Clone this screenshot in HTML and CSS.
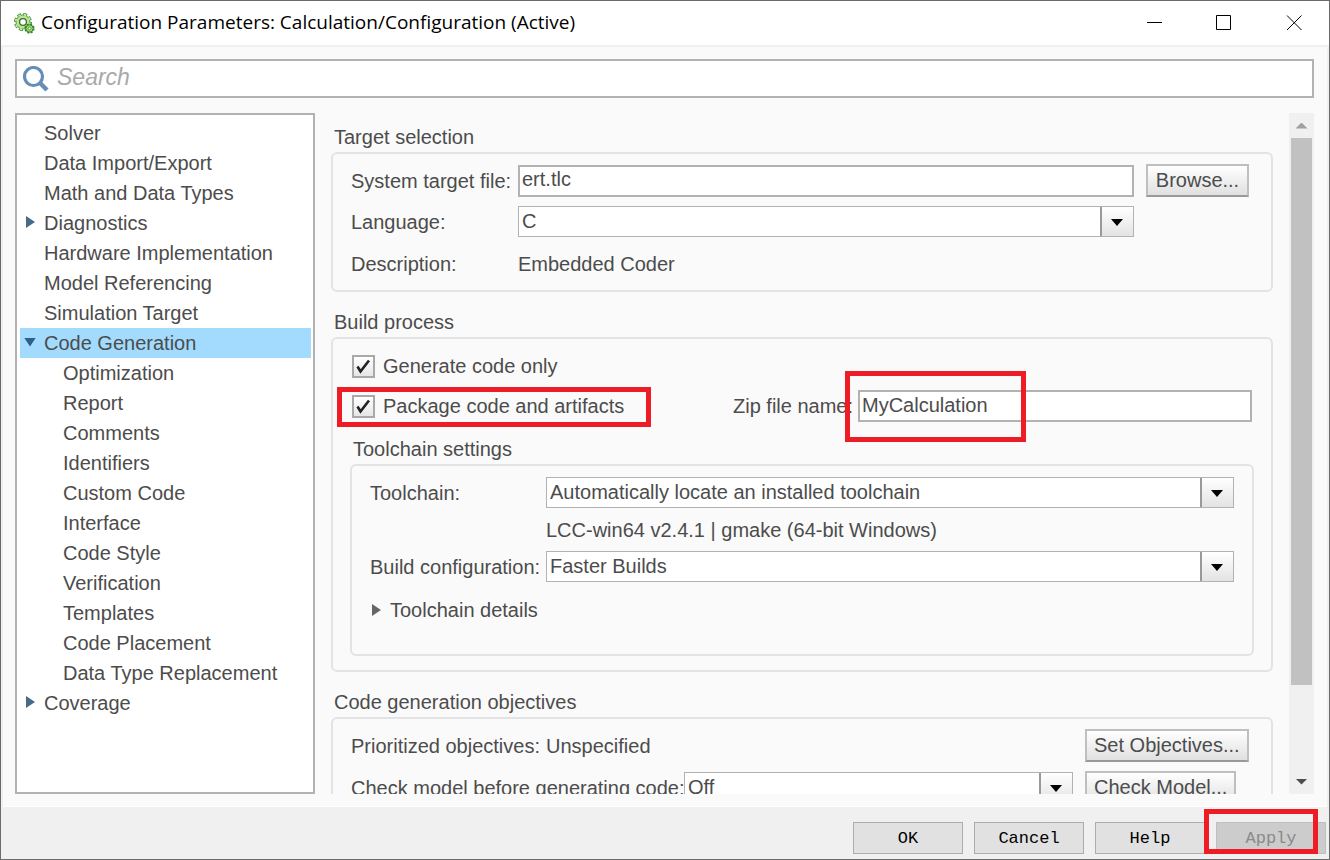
FILE: index.html
```html
<!DOCTYPE html>
<html lang="en">
<head>
  <meta charset="UTF-8">
  <meta name="viewport" content="width=device-width, initial-scale=1.0">
  <title>Configuration Parameters: Calculation/Configuration (Active)</title>
  <link rel="stylesheet" href="styles.css">
</head>
<body>
  <div class="window">
    <header class="titlebar">
      <svg class="app-icon" width="21" height="21" viewBox="0 0 21 21">
        <circle cx="9" cy="9" r="7.600" fill="none" stroke="#3d8a2e" stroke-width="2.800" stroke-dasharray="3.900 2.070"/>
        <circle cx="9" cy="9" r="7" fill="#b9e396" stroke="#57a344" stroke-width="1"/>
        <circle cx="9" cy="9" r="7.400" fill="none" stroke="#c9eaa9" stroke-width="1.800" stroke-dasharray="2.400 3.412" stroke-dashoffset="-.75"/>
        <circle cx="9" cy="9" r="3.400" fill="#fff" stroke="#3d6f33" stroke-width="1.300"/>
        <circle cx="15.500" cy="15.500" r="4.200" fill="none" stroke="#2f7f22" stroke-width="1.800" stroke-dasharray="2 1.298"/>
        <circle cx="15.500" cy="15.500" r="3.700" fill="#9bd970" stroke="#35852a" stroke-width="1"/>
        <circle cx="15.500" cy="15.500" r="1.400" fill="#fff" stroke="#3f7f2c" stroke-width=".8"/>
      </svg>
      <h1 class="title">Configuration Parameters: Calculation/Configuration (Active)</h1>
      <div class="window-buttons">
        <button type="button" aria-label="Minimize"><svg width="16" height="16" viewBox="0 0 16 16"><path d="M1 7.500h15"/></svg></button>
        <button type="button" aria-label="Maximize"><svg width="16" height="16" viewBox="0 0 16 16"><path d="M.5.500h14v14H.5z"/></svg></button>
        <button type="button" aria-label="Close"><svg width="16" height="16" viewBox="0 0 16 16"><path d="M1 .500l14.500 14.500M15.500.500L1 15"/></svg></button>
      </div>
    </header>

    <main class="content">
      <label class="search">
        <svg width="26" height="26" viewBox="0 0 26 26">
          <circle cx="10.500" cy="10.500" r="9" fill="none" stroke="#668db8" stroke-width="3.200"/>
          <path d="M17 17l7 7" stroke="#668db8" stroke-width="4.400"/>
        </svg>
        <input type="search" placeholder="Search" aria-label="Search">
      </label>

      <div class="panels">
        <nav class="tree">
          <ul>
            <li><a href="#">Solver</a></li>
            <li><a href="#">Data Import/Export</a></li>
            <li><a href="#">Math and Data Types</a></li>
            <li><a href="#" class="closed">Diagnostics</a></li>
            <li><a href="#">Hardware Implementation</a></li>
            <li><a href="#">Model Referencing</a></li>
            <li><a href="#">Simulation Target</a></li>
            <li>
              <a href="#" class="open selected">Code Generation</a>
              <ul class="children">
                <li><a href="#">Optimization</a></li>
                <li><a href="#">Report</a></li>
                <li><a href="#">Comments</a></li>
                <li><a href="#">Identifiers</a></li>
                <li><a href="#">Custom Code</a></li>
                <li><a href="#">Interface</a></li>
                <li><a href="#">Code Style</a></li>
                <li><a href="#">Verification</a></li>
                <li><a href="#">Templates</a></li>
                <li><a href="#">Code Placement</a></li>
                <li><a href="#">Data Type Replacement</a></li>
              </ul>
            </li>
            <li><a href="#" class="closed">Coverage</a></li>
          </ul>
        </nav>

        <div class="pane">
          <section>
            <h2>Target selection</h2>
            <div class="group target">
              <label for="target-file">System target file:</label>
              <input class="field" id="target-file" type="text" value="ert.tlc">
              <button class="btn" type="button">Browse...</button>
              <label for="language">Language:</label>
              <div class="select">
                <select id="language"><option>C</option><option>C++</option></select>
              </div>
              <span>Description:</span>
              <span>Embedded Coder</span>
            </div>
          </section>

          <section>
            <h2>Build process</h2>
            <div class="group build">
              <div class="option-row">
                <label class="check"><input type="checkbox" checked>Generate code only</label>
              </div>
              <div class="option-row">
                <label class="check marked mark-check"><input type="checkbox" checked>Package code and artifacts</label>
                <label for="zip-name">Zip file name:</label>
                <div class="marked mark-zip">
                  <input class="field" id="zip-name" type="text" value="MyCalculation">
                </div>
              </div>

              <h3>Toolchain settings</h3>
              <div class="group toolchain">
                <label for="toolchain">Toolchain:</label>
                <div class="select">
                  <select id="toolchain"><option>Automatically locate an installed toolchain</option></select>
                </div>
                <span class="value">LCC-win64 v2.4.1 | gmake (64-bit Windows)</span>
                <label for="build-config">Build configuration:</label>
                <div class="select">
                  <select id="build-config"><option>Faster Builds</option><option>Faster Runs</option></select>
                </div>
                <details>
                  <summary>Toolchain details</summary>
                </details>
              </div>
            </div>
          </section>

          <section>
            <h2>Code generation objectives</h2>
            <div class="group objectives">
              <div class="pair">
                <span class="objectives-name">Prioritized objectives:</span>
                <span>Unspecified</span>
              </div>
              <button class="btn" type="button">Set Objectives...</button>
              <div class="pair">
                <label class="check-name" for="check-model">Check model before generating code:</label>
                <div class="select">
                  <select id="check-model"><option>Off</option><option>On</option></select>
                </div>
              </div>
              <button class="btn" type="button">Check Model...</button>
            </div>
          </section>
        </div>

        <div class="scrollbar">
          <button class="up" type="button" aria-label="Scroll up"></button>
          <div class="track"><div class="thumb"></div></div>
          <button class="down" type="button" aria-label="Scroll down"></button>
        </div>
      </div>
    </main>

    <footer class="footer">
      <button type="button">OK</button>
      <button type="button">Cancel</button>
      <button type="button">Help</button>
      <div class="marked mark-apply">
        <button type="button" disabled>Apply</button>
      </div>
    </footer>
  </div>
</body>
</html>
```
FILE: styles.css
```css
*, *::before, *::after {
  margin: 0;
  padding: 0;
  box-sizing: border-box;
}

body {
  height: 100vh;
  overflow: hidden;
  font-family: "Liberation Sans", Arial, sans-serif;
  font-size: 20px;
  line-height: 22px;
  color: #4c4c4c;
}

button, input, select {
  font: inherit;
  color: inherit;
  border-radius: 0;
  outline: none;
}

.window {
  display: flex;
  flex-direction: column;
  height: 100%;
  border: 1px solid #6b6b6b;
  background: #f0f0f0;
}

/* title bar */
.titlebar {
  display: flex;
  align-items: center;
  height: 44px;
  padding-left: 13px;
  background: #fff;
}

.title {
  flex: 1;
  margin-left: 6px;
  padding-bottom: 2px;
  font-family: "Open Sans", "Segoe UI", sans-serif;
  font-size: 19px;
  font-weight: normal;
  color: #000;
}

.window-buttons {
  display: flex;
}

.window-buttons button {
  width: 70px;
  height: 44px;
  border: none;
  background: none;
}

.window-buttons svg {
  display: block;
  margin: 0 auto;
  fill: none;
  stroke: #000;
}

/* content */
.content {
  flex: 1;
  min-height: 0;
  display: flex;
  flex-direction: column;
  gap: 15px;
  margin: 0 2px;
  padding: 12px 13px 12px 12px;
  border-top: 2px solid #f0f0f0;
  border-bottom: 1px solid #fff;
  background: #fafafa;
}

.search {
  display: flex;
  align-items: center;
  height: 39px;
  padding-left: 6px;
  border: 2px solid #b2b2b2;
  background: #fff;
}

.search input {
  flex: 1;
  padding: 0 8px 4px;
  border: none;
  background: none;
  font-size: 23px;
  line-height: 28px;
}

.search input::placeholder {
  font-style: italic;
  color: #a9a9a9;
}

.panels {
  flex: 1;
  min-height: 0;
  display: flex;
}

/* tree */
.tree {
  width: 300px;
  padding: 3px 2px 3px 3px;
  border: 2px solid #b2b2b2;
  background: #fff;
}

.tree ul {
  list-style: none;
}

.tree a {
  display: flex;
  align-items: center;
  height: 30px;
  padding-left: 24px;
  color: inherit;
  text-decoration: none;
}

.tree .children a {
  padding-left: 43px;
}

.tree .closed, .tree .open {
  padding-left: 4px;
}

.tree .closed::before {
  content: "";
  width: 9px;
  height: 12px;
  margin: 0 9px 2px 2px;
  background: #4b6887;
  clip-path: polygon(0 0, 100% 50%, 0 100%);
}

.tree .open::before {
  content: "";
  width: 12px;
  height: 9px;
  margin: 0 8px 2px 0;
  background: #2f5f8c;
  clip-path: polygon(0 0, 100% 0, 50% 100%);
}

.tree .selected {
  background: #a3dbff;
}

/* settings pane */
.pane {
  flex: 1;
  min-width: 0;
  overflow: hidden;
  padding: 0 16px;
}

h2, h3 {
  margin: 19px 3px 4px;
  font-size: 20px;
  font-weight: normal;
}

section:first-child h2 {
  margin-top: 13px;
}

h3 {
  margin-top: 12px;
}

.group {
  border: 2px solid #e3e3e3;
  border-radius: 6px;
}

.field {
  display: block;
  width: 100%;
  height: 32px;
  padding: 0 2px 2px;
  border: 2px solid #b2b2b2;
  background: #fff;
}

.select {
  position: relative;
  height: 31px;
}

.select select {
  display: block;
  width: 100%;
  height: 100%;
  padding: 0 36px 2px 3px;
  border: 1px solid #b2b2b2;
  background: #fff;
  appearance: none;
}

.select::before {
  content: "";
  position: absolute;
  top: 1px;
  right: 1px;
  bottom: 1px;
  width: 33px;
  border-left: 2px solid #999;
  background: linear-gradient(#fff, #e3e3e3);
  pointer-events: none;
}

.select::after {
  content: "";
  position: absolute;
  top: 13px;
  right: 11px;
  width: 12px;
  height: 7px;
  background: #000;
  clip-path: polygon(0 0, 100% 0, 50% 100%);
  pointer-events: none;
}

.btn {
  height: 33px;
  padding: 0 7px 2px;
  border: 2px solid #bfbfbf;
  border-bottom-color: #999;
  background: linear-gradient(#fff, #e0e0e0);
  white-space: nowrap;
}

.target {
  display: grid;
  grid-template-columns: 167px 1fr 115px;
  grid-template-rows: 33px 9px 31px 53px;
  align-items: center;
  padding: 10px 22px 0 18px;
}

.target > :nth-child(n + 4) {
  grid-row: 3;
}

.target > :nth-child(n + 6) {
  grid-row: 4;
}

.target .btn {
  margin-left: 12px;
}

.build {
  padding: 7px 17px 14px;
}

.option-row {
  display: grid;
  grid-template-columns: 381px 125px 1fr;
  align-items: center;
  height: 40px;
  padding: 0 2px;
}

.check {
  display: flex;
  align-items: center;
  gap: 8px;
}

.check input {
  width: 23px;
  height: 23px;
  border: 2px solid #a9a9a9;
  background: linear-gradient(#fff, #e6e6e6);
  appearance: none;
}

.check input:checked {
  background: url("data:image/svg+xml,%3Csvg xmlns='http://www.w3.org/2000/svg' viewBox='0 0 19 19'%3E%3Cpath d='M3.500 9.500L6.500 14.500L15 3.500' fill='none' stroke='%23222' stroke-width='2.600'/%3E%3C/svg%3E"), linear-gradient(#fff, #e6e6e6);
}

.toolchain {
  display: grid;
  grid-template-columns: 176px 1fr;
  grid-template-rows: 31px 43px 31px;
  align-items: center;
  padding: 11px 18px 33px;
}

.toolchain .value {
  grid-column: 2;
}

.toolchain details {
  grid-column: 1 / 3;
  margin-top: 17px;
}

.toolchain summary {
  display: flex;
  align-items: center;
  gap: 9px;
  padding-left: 2px;
}

.toolchain summary::before {
  content: "";
  width: 9px;
  height: 12px;
  background: #666;
  clip-path: polygon(0 0, 100% 50%, 0 100%);
}

.objectives {
  display: grid;
  grid-template-columns: 1fr 164px;
  gap: 9px 12px;
  padding: 10px 22px 10px 18px;
}

.pair {
  display: flex;
  align-items: center;
}

.objectives-name {
  width: 195px;
}

.check-name {
  width: 333px;
  white-space: nowrap;
}

.pair .select {
  flex: 1;
}

.objectives .btn {
  justify-self: start;
}

/* scrollbar */
.scrollbar {
  display: flex;
  flex-direction: column;
  width: 25px;
  background: #f0f0f0;
}

.scrollbar button {
  height: 25px;
  border: none;
  background: none;
}

.scrollbar button::before {
  content: "";
  display: block;
  width: 12px;
  height: 6px;
  margin: 0 auto;
  background: #4d4d4d;
  clip-path: polygon(0 0, 100% 0, 50% 100%);
}

.scrollbar .up::before {
  background: #a0a0a0;
  clip-path: polygon(50% 0, 100% 100%, 0 100%);
}

.track {
  flex: 1;
  padding: 0 2px;
}

.thumb {
  height: calc(100% * 13 / 15);
  background: #c1c1c1;
}

/* footer */
.footer {
  display: flex;
  justify-content: flex-end;
  gap: 11px;
  padding: 15px 3px 5px;
}

.footer button {
  display: block;
  width: 110px;
  height: 32px;
  padding-top: 2px;
  border: 1px solid #adadad;
  background: #e1e1e1;
  font-family: "Liberation Mono", "Courier New", monospace;
  font-size: 17px;
  color: #000;
}

.footer button:disabled {
  border-color: #bfbfbf;
  background: #ccc;
  color: #8a8a8a;
}

/* red callouts */
.marked {
  position: relative;
}

.marked::after {
  content: "";
  position: absolute;
  border: 5px solid #ee1c25;
  pointer-events: none;
}

.mark-check::after {
  top: -8px;
  left: -15px;
  width: 314px;
  height: 40px;
}

.mark-zip::after {
  top: -19px;
  left: -13px;
  width: 181px;
  height: 71px;
}

.mark-apply::after {
  top: -13px;
  left: -12px;
  width: 114px;
  height: 45px;
}
```
